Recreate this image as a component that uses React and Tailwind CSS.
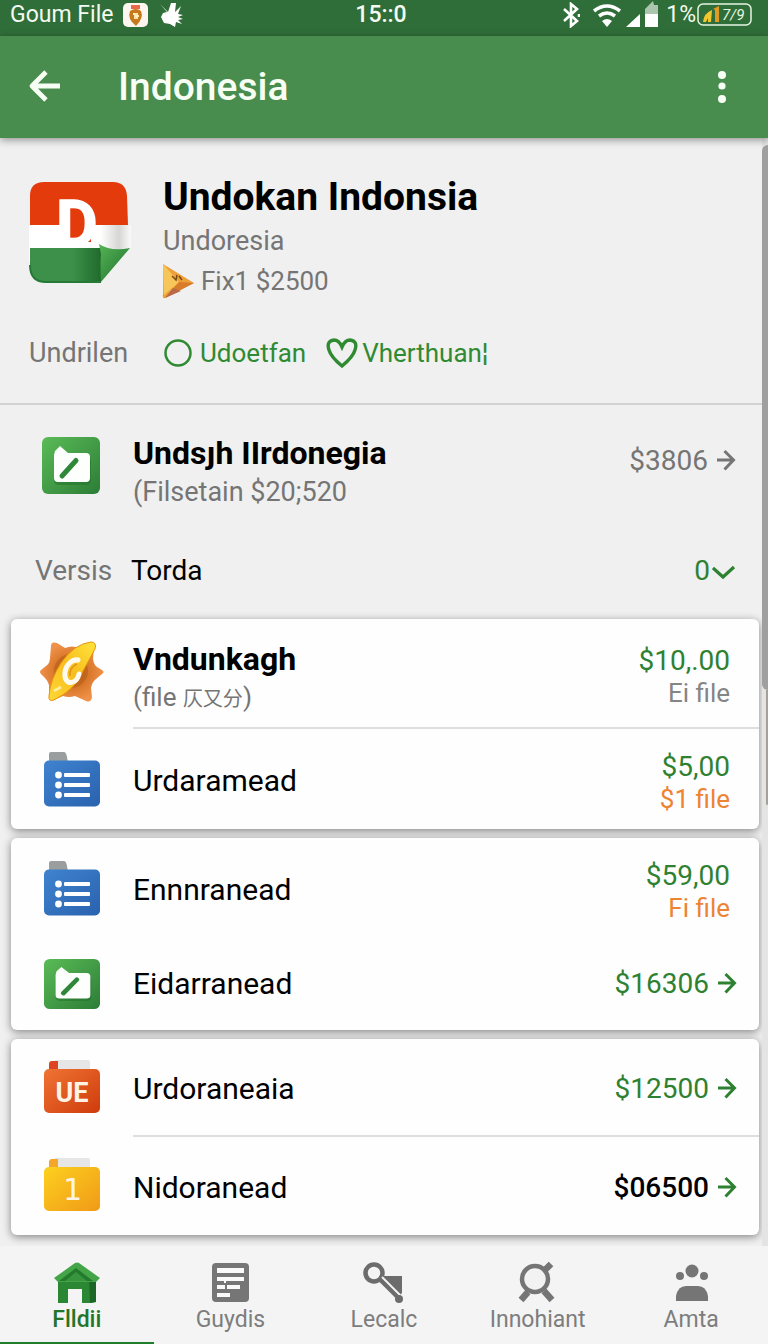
import React, { useState } from 'react';

const ArrowRight = () => (
  <svg className="w-5 h-7 shrink-0" viewBox="0 0 20 28" fill="none" stroke="currentColor" strokeWidth="3">
    <path d="M1 13h16M8.500 4l9 9-9 9.500" />
  </svg>
);

const ListFolder = () => (
  <svg className="w-14 h-14" viewBox="0 0 56 56">
    <defs>
      <linearGradient id="blueFolder" x1="0" y1="0" x2="1" y2="1">
        <stop offset="0" stopColor="#3f83cf" />
        <stop offset="1" stopColor="#2a62ae" />
      </linearGradient>
    </defs>
    <path d="M5 12V3q0-2 2-2h13q2 0 3 5l1 6z" fill="#9b9e9e" />
    <rect y="9.500" width="56" height="46" rx="5" fill="url(#blueFolder)" />
    {[24, 34, 44].map(y => (
      <g key={y} fill="#fff">
        <circle cx="14.500" cy={y} r="3.400" />
        <rect x="20" y={y - 2} width="26" height="4" rx="1" />
      </g>
    ))}
  </svg>
);

const GreenFolder = ({ className }) => (
  <svg className={className} viewBox="0 0 58 57" preserveAspectRatio="none">
    <defs>
      <linearGradient id="greenTile" x1="0" y1="0" x2="1" y2="1">
        <stop offset="0" stopColor="#5abb56" />
        <stop offset="1" stopColor="#2c7d37" />
      </linearGradient>
    </defs>
    <rect width="58" height="57" rx="6" fill="url(#greenTile)" />
    <path d="M14 19h30q5 0 5 5v19q0 5-5 5H17q-5 0-5-5V24z" fill="#1f6a2b" opacity="0.450" />
    <path d="M13 14l5-5 8 7h18q4 0 4 4v21q0 4-4 4H16q-4 0-4-4V18z" fill="#fdfffd" />
    <path d="M34 23.500L20 39" stroke="#2f8739" strokeWidth="5" strokeLinecap="round" />
  </svg>
);

const TextFolder = ({ id, from, to, tab, label, font, size, weight }) => (
  <svg className="w-14 h-14" viewBox="0 0 56 56">
    <defs>
      <linearGradient id={id} x1="0" y1="0" x2="1" y2="1">
        <stop offset="0" stopColor={from} />
        <stop offset="1" stopColor={to} />
      </linearGradient>
    </defs>
    <rect x="10" y="2" width="36" height="14" rx="2" fill="#e6e6e6" />
    <path d="M5 14V6q0-3 3-3h6v11z" fill={tab} />
    <rect y="11" width="56" height="44" rx="5" fill={`url(#${id})`} />
    <text x="28" y="44" textAnchor="middle" fontFamily={font} fontWeight={weight} fontSize={size} fill="#fff3e6">
      {label}
    </text>
  </svg>
);

const SunIcon = () => (
  <svg className="w-16 h-16" viewBox="0 0 64 64">
    <defs>
      <radialGradient id="sunBody">
        <stop offset="0" stopColor="#b9631b" />
        <stop offset="0.550" stopColor="#d9782b" />
        <stop offset="1" stopColor="#f0914a" />
      </radialGradient>
      <linearGradient id="sunLeaf" x1="1" y1="0" x2="0" y2="1">
        <stop offset="0" stopColor="#ffe53b" />
        <stop offset="0.500" stopColor="#f8bd1e" />
        <stop offset="1" stopColor="#ffd835" />
      </linearGradient>
    </defs>
    <path
      d="M11 6q0-5 6-3l8 5q7-3 14 0l10-5q6-1 5 4l-1 12q1 6 4 8l5 3q3 2 0 4l-6 5q-4 3-5 9l1 9q-1 6-6 4l-11-5q-6 2-12 0l-9 4q-5 1-5-4V45q-1-4-4-7l-4-4q-2-2 0-4l5-4q4-3 4-8z"
      fill="url(#sunBody)"
    />
    <circle cx="31" cy="31" r="17" fill="#b55d17" opacity="0.600" />
    <path
      d="M51 2q6 0 4 7L43 31Q36 49 14 60q-6 2-5-4Q10 40 21 23 34 4 51 2z"
      fill="url(#sunLeaf)"
      stroke="#e8940f"
      strokeWidth="1"
    />
    <path d="M38 20c-6-1-12 5-13 12-1 8 3 12 8 10 3-1 5-4 6-8" fill="none" stroke="#fffaf0" strokeWidth="5" strokeLinecap="round" />
    <path d="M37 24c-5 2-8 7-7 12" fill="none" stroke="#e0921a" strokeWidth="1.500" />
    <path d="M14 51l7-4" fill="none" stroke="#ffef9a" strokeWidth="3" />
  </svg>
);

const AppLogo = () => (
  <svg className="w-[102px] h-[102px] shrink-0" viewBox="0 0 102 102">
    <defs>
      <linearGradient id="fold" x1="0" y1="0" x2="1" y2="1">
        <stop offset="0" stopColor="#55b453" />
        <stop offset="1" stopColor="#1f7030" />
      </linearGradient>
      <linearGradient id="curl" x1="0" y1="0" x2="1" y2="0">
        <stop offset="0.700" stopColor="#ffffff" />
        <stop offset="0.880" stopColor="#d6d6d4" />
        <stop offset="1" stopColor="#fafafa" />
      </linearGradient>
      <linearGradient id="logoGreen" x1="0" y1="0" x2="1" y2="0">
        <stop offset="0.600" stopColor="#3c9049" />
        <stop offset="1" stopColor="#1f6b2c" />
      </linearGradient>
    </defs>
    <path d="M0 44h102v22L72 80H0z" fill="url(#curl)" />
    <path d="M1 44V15Q1 1 15 1h69q13 0 14 14l1 29z" fill="#e43b0c" />
    <path d="M1 67h71v34H17Q1 101 1 84z" fill="url(#logoGreen)" />
    <path d="M1 84q0 17 16 17h55" fill="none" stroke="#267a37" strokeWidth="2" />
    <path d="M70 63q12 8 31 4L72 101q-1-20 0-28z" fill="url(#fold)" />
    <rect x="38" y="24" width="24" height="37" fill="#e43b0c" />
    <text
      x="27"
      y="65"
      fontFamily="Roboto, sans-serif"
      fontWeight="700"
      fontSize="64"
      fill="#fff"
      stroke="#fff"
      strokeWidth="1.500"
      strokeLinejoin="round"
    >
      D
    </text>
  </svg>
);

const folders = {
  sun: <SunIcon />,
  list: <ListFolder />,
  green: <GreenFolder className="w-14 h-[50px]" />,
  ue: (
    <TextFolder id="ueFolder" from="#ef7433" to="#cf3b0c" tab="#dc4422" label="UE" font="Roboto, sans-serif" size="27" weight="700" />
  ),
  one: (
    <TextFolder
      id="oneFolder"
      from="#fdd01f"
      to="#f09a17"
      tab="#f2a72b"
      label="1"
      font="'DejaVu Sans Mono', monospace"
      size="31"
      weight="400"
    />
  )
};

const groups = [
  [
    { name: 'Vndunkagh', icon: 'sun', note: true, price: '$10,.00', sub: 'Ei file', subColor: 'text-[#858585]', line: true },
    { name: 'Urdaramead', icon: 'list', price: '$5,00', sub: '$1 file', subColor: 'text-[#ec8434]' }
  ],
  [
    { name: 'Ennnranead', icon: 'list', price: '$59,00', sub: 'Fi file', subColor: 'text-[#ec8434]' },
    { name: 'Eidarranead', icon: 'green', price: '$16306', arrow: true, short: true }
  ],
  [
    { name: 'Urdoraneaia', icon: 'ue', price: '$12500', arrow: true, line: true },
    { name: 'Nidoranead', icon: 'one', price: '$06500', arrow: true, dark: true }
  ]
];

const rowPadding = item => {
  if (item.note) return 'pt-5 pb-3';
  if (item.sub) return 'pt-[18px] pb-[14px]';
  return item.short ? 'min-h-[92px]' : 'min-h-[98px] pt-1';
};

const Row = ({ item }) => (
  <a href="#" className="flex">
    <div className={`flex w-[122px] shrink-0 pl-[33px] ${item.note ? 'items-start pt-[21px]' : 'items-center'}`}>
      <div className={item.note ? '-ml-1' : item.sub || item.short ? '' : 'pb-1'}>{folders[item.icon]}</div>
    </div>
    <div
      className={`flex flex-1 items-center justify-between ${item.line ? 'border-b-2 border-[#dedede]' : ''} ${rowPadding(item)} ${
        item.arrow ? 'pr-[22px]' : 'pr-[29px]'
      }`}
    >
      <div>
        <div className={`leading-10 ${item.note ? 'text-[32px] font-bold' : 'text-[30px]'}`}>{item.name}</div>
        {item.note && (
          <div className="text-[26px] leading-9 text-[#757575]">
            (file <span className="text-xl">仄又分</span>)
          </div>
        )}
      </div>
      {item.arrow ? (
        <div className="flex items-center gap-2 text-[28px] leading-8 text-[#2f8132]">
          <span className={item.dark ? 'font-medium text-black' : ''}>{item.price}</span>
          <ArrowRight />
        </div>
      ) : (
        <div className={`text-right ${item.note ? '' : 'pt-1'}`}>
          <div className="text-[28px] leading-8 text-[#2f8132]">{item.price}</div>
          <div className={`text-[26px] leading-8 ${item.subColor}`}>{item.sub}</div>
        </div>
      )}
    </div>
  </a>
);

const navItems = [
  {
    label: 'Flldii',
    icon: (
      <svg className="w-12 h-[42px]" viewBox="0 0 48 42">
        <path d="M5 17h38v23l-6 1H29V27H15v14H5z" fill="#2c8734" />
        <path d="M36 15h7v25l-6 1z" fill="#1c6626" />
        <path d="M22 1L1 16l4 4h38l4-4L26 1q-2-1-4 0z" fill="#43a548" />
        <path d="M23 6l17 13H6z" fill="#237a2c" />
        <path d="M23 10l11 9H12z" fill="#38953d" />
      </svg>
    )
  },
  {
    label: 'Guydis',
    icon: (
      <svg className="w-[42px] h-[42px]" viewBox="0 0 42 42">
        <rect x="3" y="1" width="37" height="39" rx="4" fill="#767676" />
        <path d="M8 6h27v5H8zM8 15h27v4H17v2h-2v-2H8zM8 23h8v4H8zM18 23h13v4H18zM8 31h13v4H8z" fill="#fafafa" />
      </svg>
    )
  },
  {
    label: 'Lecalc',
    icon: (
      <svg className="w-[46px] h-[42px]" viewBox="0 0 46 42">
        <circle cx="13" cy="11" r="8.500" fill="none" stroke="#6c6c6c" strokeWidth="4.500" />
        <path d="M19 17l20 20" stroke="#6c6c6c" strokeWidth="5" />
        <path d="M22 14h19v17q-2 3-4 1L22 17z" fill="#6c6c6c" />
        <path d="M21 15l18 18" stroke="#f2f2f2" strokeWidth="2" />
        <circle cx="38" cy="37" r="4" fill="#6c6c6c" />
      </svg>
    )
  },
  {
    label: 'Innohiant',
    icon: (
      <svg className="w-[42px] h-[42px]" viewBox="0 0 42 42">
        <path d="M27 9l7-7M11 30l-7 8M27 29l8 9" stroke="#757575" strokeWidth="6.500" />
        <circle cx="18" cy="17" r="13" fill="#f2f2f2" stroke="#757575" strokeWidth="4.500" />
      </svg>
    )
  },
  {
    label: 'Amta',
    icon: (
      <svg className="w-[42px] h-[42px]" viewBox="0 0 42 42" fill="#757575">
        <circle cx="22" cy="9" r="6.500" />
        <circle cx="10" cy="14" r="4" />
        <circle cx="34" cy="14" r="4" />
        <path d="M6 39V34Q8 24 16 24h12q8 0 10 10v5z" />
      </svg>
    )
  }
];

const StatusBar = () => (
  <div className="flex h-9 items-center bg-[#2f6e38] pr-4 pb-1.5 pl-[10px] text-[23px] leading-7 text-[#f4fbf2]">
    <div className="flex flex-1 items-center">
      <span>Goum File</span>
      <svg className="ml-[10px] h-6 w-[25px]" viewBox="0 0 25 24">
        <rect width="25" height="24" rx="5" fill="#fdf6ee" />
        <rect x="8" y="2" width="9" height="4" fill="#e9684a" />
        <path d="M7 8q6-4 11 0 3 7-5 15Q4 16 7 8z" fill="#c8791c" />
        <path d="M10 11h2v5M14 10v6M13 13h3" stroke="#fff1b8" strokeWidth="1.800" fill="none" />
      </svg>
      <svg className="ml-3 h-[26px] w-6" viewBox="0 0 24 26" fill="#fff">
        <path d="M0 2l8 8 3-9 5 0-1 9 6-6-3 8 5 1-5 2 5 2-5 1 4 4-6-2-1 5-5-3-6-1-3-6 2-4 4-1z" />
      </svg>
    </div>
    <span className="font-medium">15::0</span>
    <div className="flex flex-1 items-center justify-end">
      <svg className="h-[26px] w-[18px]" viewBox="0 0 18 26" fill="none" stroke="#fff" strokeWidth="2.600">
        <path d="M2 7l13 12-6 5V2l6 5L2 19" />
        <path d="M17 12v3" />
      </svg>
      <svg className="ml-3 h-6 w-[30px]" viewBox="0 0 30 24" fill="none" stroke="#fff" strokeWidth="3.500">
        <path d="M2 8q13-10 26 0M7 13q8-6 16 0" />
        <path d="M15 24l-5-6q5-4 10 0z" fill="#fff" stroke="none" />
      </svg>
      <svg className="ml-1 h-7 w-8" viewBox="0 0 32 28" fill="#fff">
        <path d="M0 26L14 13v13zM19 13h13v13H19z" />
        <path d="M19 13V8L27 0l1 4h4v9z" opacity="0.600" />
      </svg>
      <span className="ml-2">1%</span>
      <svg className="h-6 w-[56px]" viewBox="0 0 56 24">
        <rect x="2" y="1" width="53" height="21" rx="5" fill="none" stroke="#e6f5e2" strokeWidth="1.500" />
        <path d="M7 19q1-9 9-12l-1 12h-3v-4l-2 4z" fill="#f2c62f" />
        <path d="M17 6l6-3v16h-4V7z" fill="#e29a26" />
        <text x="26" y="17" fontFamily="Roboto, sans-serif" fontStyle="italic" fontSize="15" fill="#e6f5e2">
          7/9
        </text>
      </svg>
    </div>
  </div>
);

export default function App() {
  const [active, setActive] = useState('Flldii');

  return (
    <div className="flex min-h-screen flex-col bg-[#f0f0f0] font-['Roboto','Noto_Sans_CJK_SC',sans-serif] text-black">
      <StatusBar />
      <header className="relative flex h-[102px] items-center justify-between bg-[#488c4e] pr-9 pl-7 text-[#f7fff5] shadow-[0_2px_8px_rgba(0,0,0,0.400)]">
        <div className="flex items-center">
          <button aria-label="Back">
            <svg className="h-9 w-[34px]" viewBox="0 0 34 36" fill="none" stroke="currentColor" strokeWidth="4.800">
              <path d="M32 17H5M18 3L4 17l14 14" strokeLinejoin="round" />
            </svg>
          </button>
          <h1 className="ml-14 text-[39px] leading-[48px] font-medium">Indonesia</h1>
        </div>
        <button aria-label="More options">
          <svg className="h-8 w-5" viewBox="0 0 20 32" fill="currentColor">
            <circle cx="10" cy="4" r="4" />
            <circle cx="10" cy="15" r="3.600" />
            <circle cx="10" cy="28" r="4" />
          </svg>
        </button>
      </header>

      <div className="flex flex-1">
        <main className="min-w-0 flex-1">
          <section className="border-b-2 border-[#d2d2d2] pt-[35px] pb-[30px] pl-[29px]">
            <div className="flex gap-8">
              <div className="pt-2">
                <AppLogo />
              </div>
              <div className="leading-10 text-[#757575]">
                <h2 className="text-[39px] leading-[48px] font-bold text-black">Undokan Indonsia</h2>
                <p className="text-[27px] leading-10">Undoresia</p>
                <div className="flex items-center gap-1.5 text-[26px] leading-10">
                  <svg className="-ml-0.5 h-9 w-[34px]" viewBox="0 0 34 36">
                    <path d="M2 1l31 19L4 35q-3 1-2-4z" fill="#eda037" />
                    <path d="M2 1l16 18-15 13z" fill="#f7c65b" />
                    <path d="M18 19l15 1L4 35z" fill="#d87b2b" />
                    <path d="M4 35l8-10 8 3z" fill="#b9684a" />
                    <path d="M11 13l4 4 1-5M18 13l3 4" stroke="#7a4a15" strokeWidth="1.500" fill="none" />
                  </svg>
                  <span>Fix1 $2500</span>
                </div>
              </div>
            </div>
            <div className="mt-8 flex items-center text-[26px] leading-10 text-[#2f8a32]">
              <span className="w-[135px] text-[27px] text-[#757575]">Undrilen</span>
              <button className="flex items-center gap-2">
                <svg className="h-7 w-7" viewBox="0 0 28 28" fill="none" stroke="currentColor" strokeWidth="2.500">
                  <circle cx="14" cy="14" r="12.500" />
                </svg>
                Udoetfan
              </button>
              <button className="ml-5 flex items-center gap-1">
                <svg className="h-8 w-8" viewBox="0 0 32 32" fill="none" stroke="currentColor" strokeWidth="3.400">
                  <path d="M16 29Q5 20 3 13 0 4 8 3q5 0 8 7 3-7 8-7 8 1 5 10-2 7-13 16z" />
                </svg>
                Vherthuan¦
              </button>
            </div>
          </section>

          <a href="#" className="flex items-start pt-7 pr-[26px] pl-[42px]">
            <GreenFolder className="mt-1 h-[57px] w-[58px]" />
            <div className="ml-[33px] flex-1">
              <h3 className="text-[32px] leading-10 font-bold">Undsȷh IIrdonegia</h3>
              <p className="text-[27px] leading-[38px] text-[#757575]">(Filsetain $20;520</p>
            </div>
            <div className="mt-2 flex items-center gap-2 text-[28px] leading-10 text-[#757575]">
              $3806
              <ArrowRight />
            </div>
          </a>

          <div className="flex items-center pt-10 pr-[26px] pb-7 pl-[35px] text-[28px] leading-10">
            <span className="w-24 text-[#757575]">Versis</span>
            <span className="flex-1">Torda</span>
            <button className="flex items-center gap-0.5 text-[#2f8132]">
              0
              <svg className="h-6 w-6" viewBox="0 0 24 24" fill="none" stroke="currentColor" strokeWidth="3.200">
                <path d="M1 9l10 9L22 8" />
              </svg>
            </button>
          </div>

          <div className="flex flex-col gap-[9px] pr-[3px] pb-[9px] pl-[11px]">
            {groups.map((group, i) => (
              <div key={i} className="rounded-md bg-[#fefefe] shadow-[0_2px_8px_rgba(0,0,0,0.450)]">
                {group.map(item => (
                  <Row key={item.name} item={item} />
                ))}
              </div>
            ))}
          </div>
        </main>

        {/* Scroll track */}
        <div className="w-1.5 shrink-0 bg-[#e4e4e4] pt-[7px]">
          <div className="h-[545px] rounded-l-full bg-[#9f9f9f]" />
          <div className="ml-1 h-[115px] rounded-b-full bg-[#a5a199]" />
        </div>
      </div>

      <nav className="relative grid grid-cols-5 bg-[#f4f4f4]">
        {navItems.map(item => (
          <a
            key={item.label}
            href="#"
            onClick={() => setActive(item.label)}
            className={`flex flex-col items-center border-b-2 pt-4 pb-2 text-[23px] ${
              active === item.label ? 'border-[#1f7d2c] font-medium text-[#23752a]' : 'border-transparent text-[#7d7d7d]'
            }`}
          >
            {item.icon}
            <span className="mt-0.5 leading-7">{item.label}</span>
          </a>
        ))}
      </nav>
    </div>
  );
}
